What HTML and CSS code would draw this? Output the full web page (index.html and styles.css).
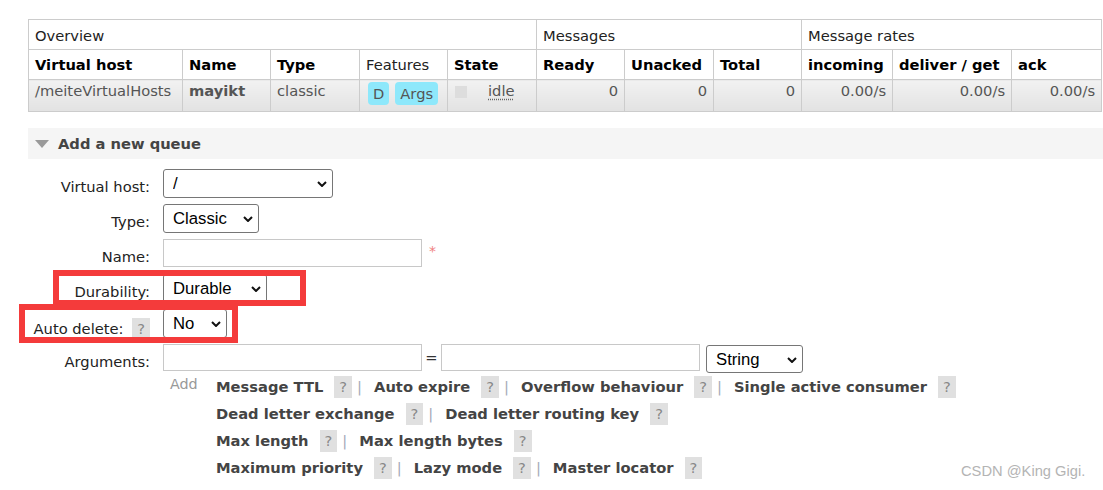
FILE: index.html
```html
<!DOCTYPE html>
<html>
<head>
<meta charset="utf-8">
<title>Queues</title>
<link rel="stylesheet" href="styles.css">
</head>
<body>
<div class="page">
  <table class="queues">
    <colgroup>
      <col class="c-vh"><col class="c-name"><col class="c-type"><col class="c-feat"><col class="c-state">
      <col class="c-ready"><col class="c-unack"><col class="c-total">
      <col class="c-in"><col class="c-deliver"><col class="c-ack">
    </colgroup>
    <thead>
      <tr class="group">
        <th colspan="5">Overview</th>
        <th colspan="3">Messages</th>
        <th colspan="3">Message rates</th>
      </tr>
      <tr class="cols">
        <th>Virtual host</th><th>Name</th><th>Type</th><th class="plain">Features</th><th>State</th>
        <th>Ready</th><th>Unacked</th><th>Total</th>
        <th>incoming</th><th>deliver / get</th><th>ack</th>
      </tr>
    </thead>
    <tbody>
      <tr class="data">
        <td>/meiteVirtualHosts</td>
        <td class="qname">mayikt</td>
        <td>classic</td>
        <td class="feat"><span class="badge">D</span><span class="badge">Args</span></td>
        <td class="state"><span class="dot"></span><span class="idle">idle</span></td>
        <td class="num">0</td>
        <td class="num">0</td>
        <td class="num">0</td>
        <td class="num">0.00/s</td>
        <td class="num">0.00/s</td>
        <td class="num">0.00/s</td>
      </tr>
    </tbody>
  </table>

  <section class="addq">
    <h2 class="sec-head"><span class="tri"></span>Add a new queue</h2>
    <div class="form">
      <div class="row">
        <label class="lbl">Virtual host:</label>
        <span class="sel w-vh"><select><option>/</option></select><svg viewBox="0 0 10 6"><path d="M1 1 L5 5 L9 1"/></svg></span>
      </div>
      <div class="row">
        <label class="lbl">Type:</label>
        <span class="sel w-type"><select><option>Classic</option></select><svg viewBox="0 0 10 6"><path d="M1 1 L5 5 L9 1"/></svg></span>
      </div>
      <div class="row">
        <label class="lbl">Name:</label>
        <input class="txt w-name" type="text"><span class="req">*</span>
      </div>
      <div class="row">
        <label class="lbl">Durability:</label>
        <span class="sel w-dur"><select><option>Durable</option></select><svg viewBox="0 0 10 6"><path d="M1 1 L5 5 L9 1"/></svg></span>
      </div>
      <div class="row">
        <label class="lbl">Auto delete: <span class="help">?</span></label>
        <span class="sel w-ad"><select><option>No</option></select><svg viewBox="0 0 10 6"><path d="M1 1 L5 5 L9 1"/></svg></span>
      </div>
      <div class="row">
        <label class="lbl">Arguments:</label>
        <input class="txt w-arg" type="text"><span class="eq">=</span><input class="txt w-arg" type="text">
        <span class="sel w-str"><select><option>String</option></select><svg viewBox="0 0 10 6"><path d="M1 1 L5 5 L9 1"/></svg></span>
      </div>
      <div class="adds">
        <span class="add-lbl">Add</span>
        <div class="links">
          <div class="line"><b>Message TTL</b><span class="help">?</span><span class="sep">|</span><b>Auto expire</b><span class="help">?</span><span class="sep">|</span><b>Overflow behaviour</b><span class="help">?</span><span class="sep">|</span><b>Single active consumer</b><span class="help">?</span></div>
          <div class="line"><b>Dead letter exchange</b><span class="help">?</span><span class="sep">|</span><b>Dead letter routing key</b><span class="help">?</span></div>
          <div class="line"><b>Max length</b><span class="help">?</span><span class="sep">|</span><b>Max length bytes</b><span class="help">?</span></div>
          <div class="line"><b>Maximum priority</b><span class="help">?</span><span class="sep">|</span><b>Lazy mode</b><span class="help">?</span><span class="sep">|</span><b>Master locator</b><span class="help">?</span></div>
        </div>
      </div>
    </div>
  </section>
</div>
<div class="mark mark-dur"></div>
<div class="mark mark-ad"></div>
<div class="watermark">CSDN @King Gigi.</div>
</body>
</html>
```
FILE: styles.css
```css
html, body {
  margin: 0;
  padding: 0;
}
body {
  position: relative;
  min-height: 490px;
  font-family: "DejaVu Sans", Verdana, sans-serif;
  font-size: 14.7px;
  color: #000;
  background: #fff;
}
.page {
  padding: 19px 0 0 28px;
}

/* table */
.queues {
  border-collapse: collapse;
  table-layout: fixed;
  width: 1073px;
}
.c-vh { width: 154px; }
.c-name { width: 88px; }
.c-type { width: 89px; }
.c-feat { width: 88px; }
.c-state { width: 89px; }
.c-ready { width: 88px; }
.c-unack { width: 89px; }
.c-total { width: 88px; }
.c-in { width: 91px; }
.c-deliver { width: 119px; }
.c-ack { width: 90px; }

.queues th,
.queues td {
  border: 1px solid #ccc;
  padding: 0 6px;
  text-align: left;
  white-space: nowrap;
  overflow: hidden;
}
.queues tr.group th {
  height: 27px;
  font-weight: normal;
  color: #222;
  vertical-align: middle;
  padding-top: 2px;
}
.queues tr.cols th {
  height: 29px;
  font-weight: bold;
  color: #000;
}
.queues tr.cols th.plain {
  font-weight: normal;
  color: #222;
}
.queues tr.data td {
  height: 32px;
  vertical-align: top;
  padding-top: 2px;
  padding-bottom: 0;
  color: #555;
  background: linear-gradient(#f2f2f2, #e2e2e2);
  box-sizing: border-box;
}
.queues td.qname {
  font-weight: bold;
  color: #000;
}
.queues td.feat {
  padding-left: 8px;
}
.badge {
  display: inline-block;
  background: #8ee8fb;
  color: #555;
  padding: 3px 5px;
  border-radius: 4px;
  margin-right: 6px;
  line-height: 17px;
}
.queues td.state {
  padding-left: 7px;
}
.dot {
  display: inline-block;
  width: 12px;
  height: 12px;
  background: #ddd;
  margin-top: 4px;
  margin-right: 21px;
  vertical-align: top;
}
.idle {
  text-decoration: underline dotted #666;
  text-underline-offset: 3px;
}
.queues td.num {
  text-align: right;
  padding-right: 6px;
}

/* section */
.sec-head {
  margin: 16px 0 0;
  height: 31px;
  background: #f5f5f5;
  font-size: 14.7px;
  font-weight: bold;
  color: #444;
  display: flex;
  align-items: center;
  padding-left: 7px;
}
.tri {
  width: 0;
  height: 0;
  border-left: 7.5px solid transparent;
  border-right: 7.5px solid transparent;
  border-top: 8px solid #9a9a9a;
  margin-right: 9px;
}

.form {
  margin-top: 10px;
}
.row {
  display: flex;
  align-items: flex-start;
  height: 29px;
  margin-bottom: 6px;
}
.lbl {
  width: 122px;
  flex: none;
  text-align: right;
  padding-top: 9px;
  margin-right: 13px;
  color: #222;
  line-height: normal;
}

.sel {
  position: relative;
  display: inline-block;
  flex: none;
}
.sel select {
  -webkit-appearance: none;
  appearance: none;
  display: block;
  height: 29px;
  border: 1px solid #767676;
  border-radius: 3px;
  background: #fff;
  font-family: "Liberation Sans", Arial, sans-serif;
  font-size: 16.7px;
  color: #000;
  padding: 0 0 0 9px;
  margin: 0;
  box-sizing: border-box;
}
.sel svg {
  position: absolute;
  right: 6px;
  top: 12px;
  width: 10px;
  height: 6px;
  pointer-events: none;
}
.sel svg path {
  fill: none;
  stroke: #111;
  stroke-width: 2;
}
.w-vh select { width: 170px; }
.w-type select { width: 96px; }
.w-dur select { width: 104px; }
.w-ad select { width: 64px; }
.w-str select { width: 97px; height: 28px; }
.w-str { margin-left: 6px; margin-top: 1px; }

.txt {
  height: 28px;
  border: 1px solid #c8c8c8;
  background: #fff;
  padding: 0;
  margin: 0;
  box-sizing: border-box;
  flex: none;
}
.w-name { width: 259px; }
.w-arg { width: 259px; height: 27px; }
.req {
  color: #f08080;
  font-size: 14px;
  margin-left: 7px;
  padding-top: 4px;
}
.eq {
  width: 19px;
  text-align: center;
  padding-top: 5px;
  color: #333;
  flex: none;
}

.lbl .help {
  margin-left: 4px;
}
.help {
  display: inline-block;
  background: #e0e0e0;
  color: #888;
  font-weight: normal;
  padding: 2px 5px;
  line-height: 18px;
  margin-left: 11px;
}

.adds {
  display: flex;
  margin-top: -6px;
  padding-left: 135px;
}
.add-lbl {
  width: 46px;
  flex: none;
  padding-left: 7px;
  color: #999;
  font-size: 14.3px;
  line-height: 23px;
}
.links {
  line-height: 27px;
  color: #444;
}
.links b {
  font-weight: bold;
  color: #444;
}
.sep {
  color: #a3a9b8;
  margin: 0 12px 0 5px;
}

/* annotation boxes drawn over the form */
.mark {
  position: absolute;
  border: 6px solid #f43b3b;
  box-sizing: border-box;
}
.mark-dur {
  left: 53px;
  top: 270px;
  width: 253px;
  height: 36px;
}
.mark-ad {
  left: 19px;
  top: 304px;
  width: 219px;
  height: 39px;
}

.watermark {
  position: absolute;
  left: 961px;
  top: 463px;
  font-family: "Liberation Sans", Arial, sans-serif;
  font-size: 14.7px;
  color: #b4b4b4;
  white-space: nowrap;
}
```
